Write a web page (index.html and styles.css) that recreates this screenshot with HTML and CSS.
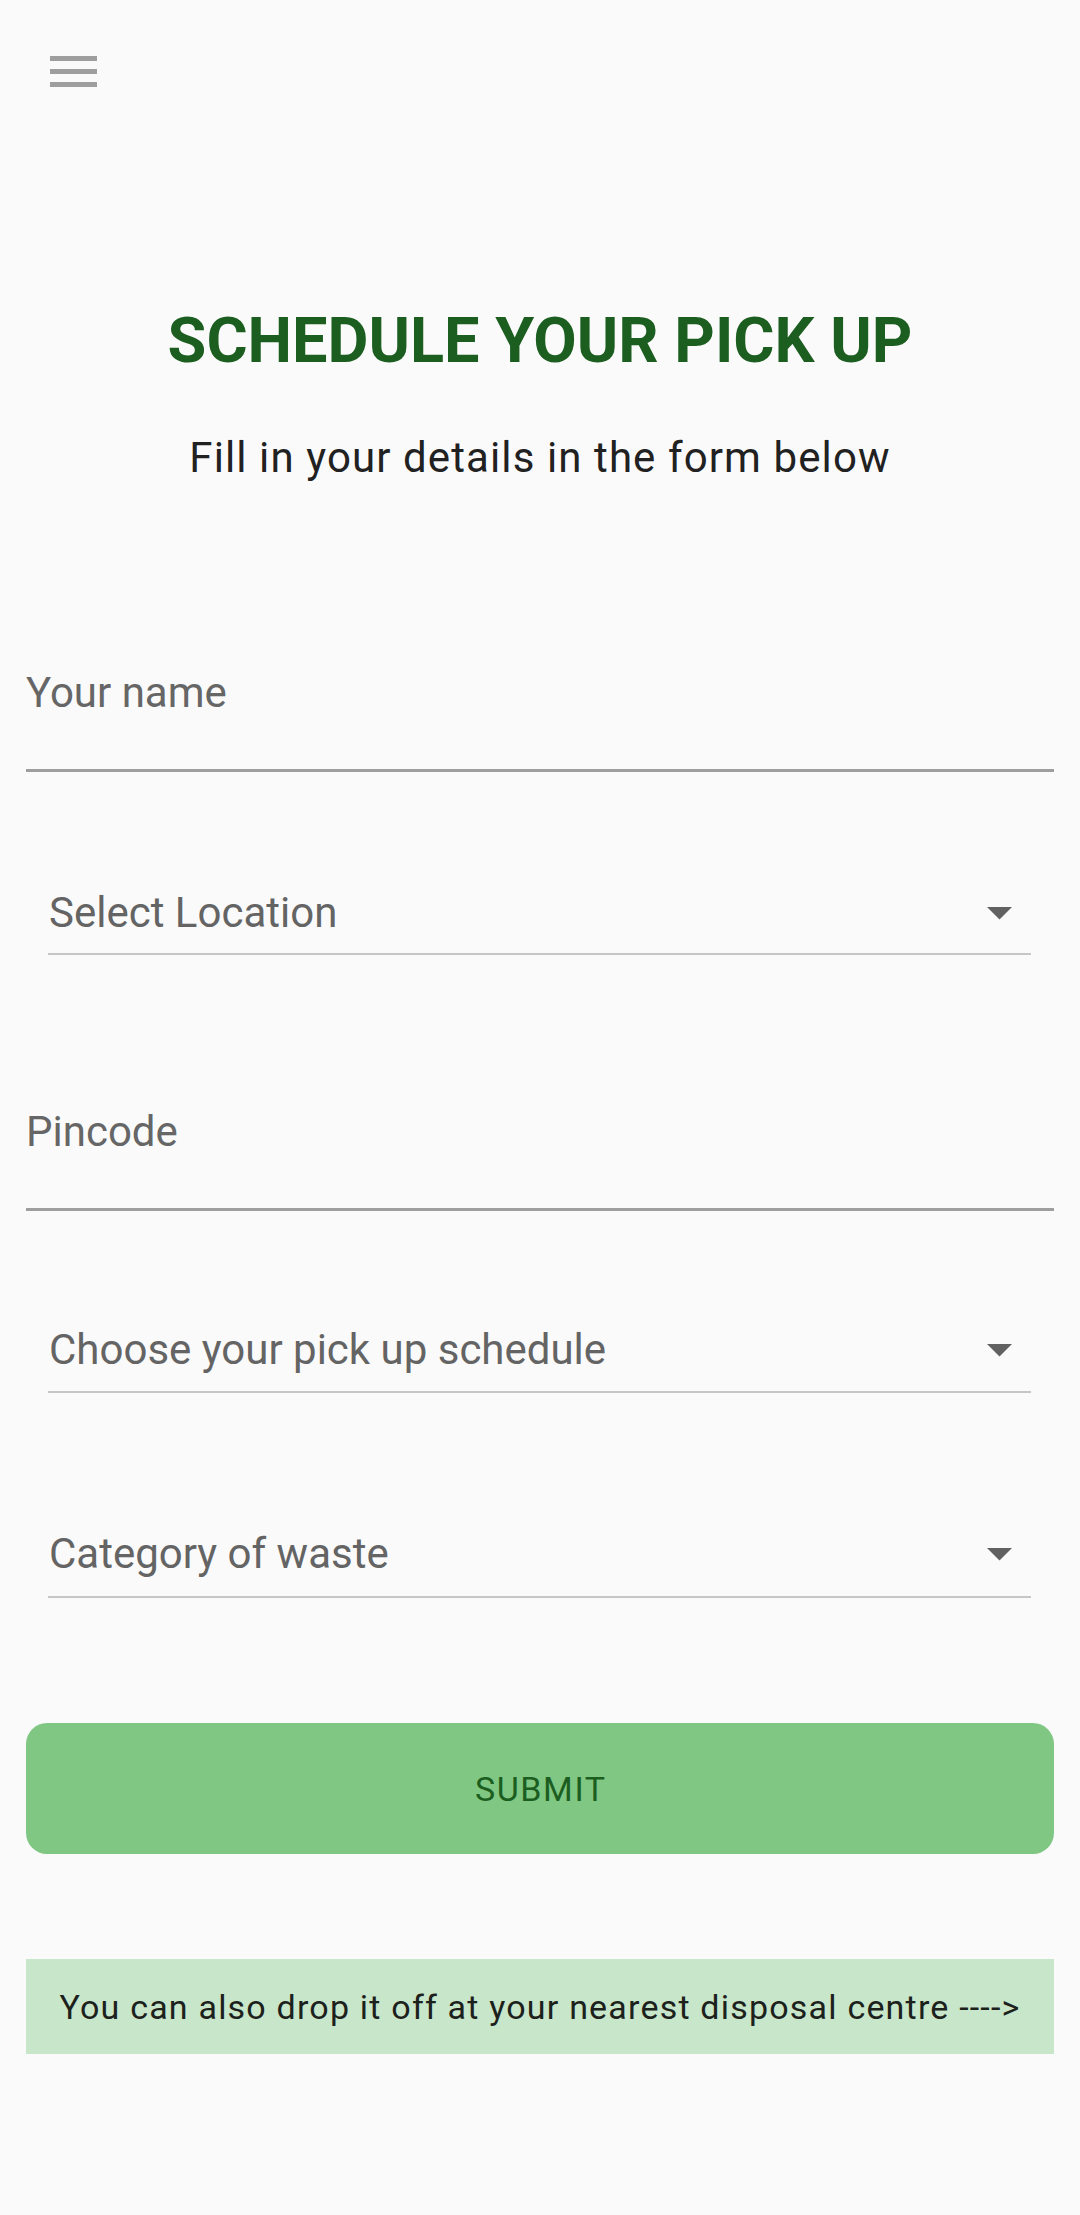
FILE: index.html
```html
<!DOCTYPE html>
<html lang="en">
<head>
<meta charset="utf-8">
<title>Schedule your pick up</title>
<link rel="stylesheet" href="styles.css">
</head>
<body>
<header class="topbar">
  <button class="menu" type="button" aria-label="Menu">
    <span class="bar"></span>
    <span class="bar"></span>
    <span class="bar"></span>
  </button>
</header>
<main class="page">
  <h1 class="title">SCHEDULE YOUR PICK UP</h1>
  <p class="subtitle">Fill in your details in the form below</p>
  <form class="form">
    <div class="field text-field f-name"><span class="hint">Your name</span></div>
    <div class="field dropdown f-location">
      <span class="hint">Select Location</span>
      <svg class="arrow" viewBox="0 0 25 13" width="25" height="13"><path d="M0 0H25L12.5 12.5Z"/></svg>
    </div>
    <div class="field text-field f-pincode"><span class="hint">Pincode</span></div>
    <div class="field dropdown f-schedule">
      <span class="hint">Choose your pick up schedule</span>
      <svg class="arrow" viewBox="0 0 25 13" width="25" height="13"><path d="M0 0H25L12.5 12.5Z"/></svg>
    </div>
    <div class="field dropdown f-category">
      <span class="hint">Category of waste</span>
      <svg class="arrow" viewBox="0 0 25 13" width="25" height="13"><path d="M0 0H25L12.5 12.5Z"/></svg>
    </div>
    <button class="submit" type="button"><span class="submit-label">SUBMIT</span></button>
  </form>
  <div class="banner">You can also drop it off at your nearest disposal centre ----&gt;</div>
</main>
</body>
</html>
```
FILE: styles.css
```css
html, body {
  margin: 0;
  padding: 0;
  background: #fafafa;
}
body {
  font-family: Roboto, "Noto Sans", "Liberation Sans", sans-serif;
  color: #212121;
}
.topbar {
  padding: 56px 0 0 50px;
}
.menu {
  display: flex;
  flex-direction: column;
  gap: 8px;
  width: 47px;
  padding: 0;
  border: 0;
  background: transparent;
}
.menu .bar {
  display: block;
  width: 47px;
  height: 5px;
  background: #9e9e9e;
}
.page {
  display: flex;
  flex-direction: column;
}
.title {
  margin: 217px 0 0;
  font-size: 63px;
  line-height: 74px;
  font-weight: 700;
  color: #1b5e20;
  text-align: center;
}
.subtitle {
  margin: 55px 0 0;
  font-size: 42px;
  line-height: 50px;
  letter-spacing: 1.1px;
  color: #212121;
  text-align: center;
}
.form {
  display: flex;
  flex-direction: column;
  margin: 0;
}
.field .hint {
  font-size: 42px;
  line-height: 50px;
}
.text-field {
  margin: 0 26px;
  padding-bottom: 51px;
  border-bottom: 3px solid #9e9e9e;
}
.text-field .hint {
  color: #666666;
}
.dropdown {
  display: flex;
  align-items: center;
  justify-content: space-between;
  margin: 0 49px 0 48px;
  padding-left: 1px;
  padding-right: 19px;
  border-bottom: 2px solid #c6c6c6;
}
.dropdown .hint {
  color: #646464;
}
.arrow {
  fill: #616161;
  display: block;
}
.f-name { margin-top: 185px; }
.f-location { margin-top: 116px; padding-bottom: 15px; }
.f-pincode { margin-top: 152px; }
.f-schedule { margin-top: 114px; padding-bottom: 16px; }
.f-category { margin-top: 136px; padding-bottom: 17px; }
.submit {
  margin: 125px 26px 0;
  height: 131px;
  border: 0;
  border-radius: 21px;
  background: #81c784;
  color: #1b5e20;
  font-family: Roboto, "Noto Sans", "Liberation Sans", sans-serif;
  font-size: 34px;
  line-height: 40px;
  padding: 0;
}
.submit-label {
  letter-spacing: 1.6px;
  margin-right: -1.6px;
}
.banner {
  margin: 105px 26px 0;
  padding: 28px 0 27px;
  background: #c8e6c9;
  color: #1c211c;
  font-size: 34px;
  line-height: 40px;
  letter-spacing: 1.2px;
  text-align: center;
}
```
